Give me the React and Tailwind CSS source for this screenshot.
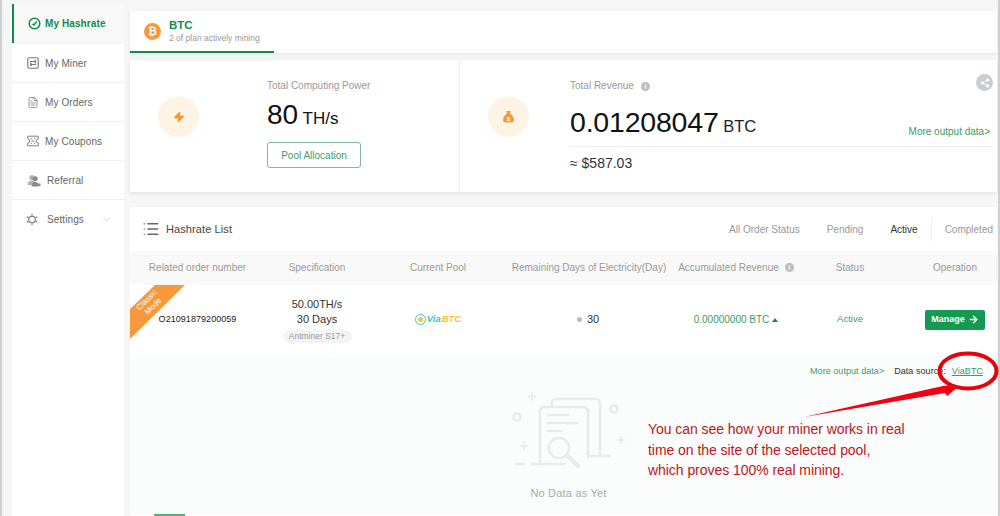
import React from 'react';
import { ArrowRight, ChevronDown, FileText, List, Share2, Zap } from 'lucide-react';

const font = { fontFamily: '"Liberation Sans", Arial, sans-serif' };

const HashIcon = () => (
  <svg width="13" height="13" viewBox="0 0 13 13" fill="none" stroke="#148a4c" strokeWidth="1.5">
    <circle cx="6.500" cy="6.500" r="5.300" />
    <path d="M4.500 6.800l1.500 1.200L8.800 4.500" />
  </svg>
);

const MinerIcon = () => (
  <svg width="12" height="12" viewBox="0 0 12 12" fill="none" stroke="#777" strokeWidth="1.1">
    <rect x="0.800" y="0.800" width="10.400" height="10.400" rx="1.500" />
    <path d="M3 4.500h3.500a2 2 0 0 1 2 2M9 7.500H5.500a2 2 0 0 1-2-2M7.500 3l1.500 1.500M4.500 9L3 7.500" />
  </svg>
);

const CouponIcon = () => (
  <svg width="13" height="12" viewBox="0 0 13 12" fill="none" stroke="#777" strokeWidth="1">
    <path d="M0.800 0.800h11.400v3a2.200 2.200 0 0 0 0 4.400v3H0.800v-3a2.200 2.200 0 0 0 0-4.400z" />
    <path d="M4 3.500h1.500M7.500 3.500H9M4 8.500h1.500M7.500 8.500H9M5 6h3" />
  </svg>
);

const ReferralIcon = () => (
  <svg width="14" height="13" viewBox="0 0 14 13" fill="#8a8a8a">
    <circle cx="5" cy="3.500" r="2.600" fill="#b0b0b0" />
    <path d="M0.500 11c0-3 2-4.500 4.500-4.500S9 8 9 11z" fill="#b0b0b0" />
    <circle cx="8.200" cy="4.800" r="2.500" />
    <path d="M4.500 12.500c0-3 1.500-4.500 3.700-4.500s3.800 1.500 3.800 4.500z" />
    <path d="M11 9.500h2.500v2.500H12z" />
  </svg>
);

const GearIcon = () => (
  <svg width="12" height="13" viewBox="0 0 12 13" fill="none" stroke="#777">
    <circle cx="6" cy="6.500" r="3.300" strokeWidth="1.100" />
    <path d="M6 0.800v2M6 10.200v2M0.800 3.700l1.700 1M9.500 8.300l1.700 1M0.800 9.300l1.700-1M9.500 4.700l1.700-1" strokeWidth="1.100" />
  </svg>
);

const InfoDot = () => (
  <span className="flex h-[9px] w-[9px] items-center justify-center rounded-full bg-[#bdbdbd] text-[7px] font-bold leading-none text-white">i</span>
);

const BtcCoin = () => (
  <div className="flex h-[17px] w-[17px] items-center justify-center rounded-full bg-[#f7983a] text-[11px] font-bold text-white">₿</div>
);

const navItems = [
  { label: 'My Miner', icon: <MinerIcon /> },
  { label: 'My Orders', icon: <FileText size={13} strokeWidth={1.5} color="#777" /> },
  { label: 'My Coupons', icon: <CouponIcon /> },
];

const columns = 'grid grid-cols-[135px_104px_138px_164px_130px_98px_98px] items-center';

const EmptyArt = () => (
  <svg width="114" height="88" viewBox="512 384 114 88" fill="none" stroke="#e9ebea" strokeWidth="2.600" strokeLinecap="round">
    <path d="M532 391v7M528.500 394.500h7M524 441v6M521 444h6M621 435v6M618 438h6" strokeWidth="1.800" />
    <circle cx="517" cy="415" r="3.500" />
    <circle cx="614" cy="407" r="3.500" />
    <path d="M552 404v-3a4 4 0 0 1 4-4h40a4 4 0 0 1 4 4v53" />
    <path d="M540 462v-52a5 5 0 0 1 5-5h38a5 5 0 0 1 5 5v45" />
    <path d="M548 413h20M548 421h29M548 429h14" />
    <circle cx="559" cy="446" r="10" />
    <path d="M568 454l10 10" strokeWidth="4.500" />
    <path d="M515 462h10M532 462h33M590 454h20" />
  </svg>
);

export default function App() {
  return (
    <div className="relative flex h-[516px] w-[1000px] overflow-hidden bg-[#f6f6f6] pl-[12px] pr-[3px] text-[10px] text-[#333]" style={font}>
      {/* left edge of the browser frame */}
      <div className="absolute left-0 top-0 h-full w-[2px] bg-[#cfcfcf]" />
      <div className="absolute right-0 top-0 h-full w-[2px] bg-[#cfcfcf]" />

      <aside className="mr-[6px] mt-[4px] w-[112px] shrink-0 bg-white">
        <div className="flex h-[39px] items-center gap-[4px] border-l-2 border-[#148a4c] bg-[#f8f8f8] pl-[14px] font-bold tracking-[0.1px] text-[#148a4c]">
          <HashIcon />
          <span>My Hashrate</span>
        </div>
        {navItems.map((item) => (
          <div key={item.label} className="flex h-[39px] items-center gap-[6px] border-t border-[#f1f1f1] pl-[15px] tracking-[0.1px] text-[#666]">
            <span className="flex w-[12px] justify-center">{item.icon}</span>
            <span>{item.label}</span>
          </div>
        ))}
        <div className="flex h-[39px] items-center gap-[6px] border-t border-[#f1f1f1] pl-[15px] tracking-[0.1px] text-[#666]">
          <ReferralIcon />
          <span>Referral</span>
        </div>
        <div className="flex h-[39px] items-center border-t border-[#f1f1f1] pl-[14px] tracking-[0.1px] text-[#666]">
          <GearIcon />
          <span className="ml-[9px]">Settings</span>
          <ChevronDown size={11} strokeWidth={1.2} color="#aaa" className="ml-[17px]" />
        </div>
      </aside>

      <main className="flex w-[867px] flex-col pt-[11px]">
        <div className="h-[42px] bg-white shadow-[0_1px_3px_rgba(0,0,0,0.08)]">
          <div className="flex h-[42px] w-[144px] items-center gap-[8px] border-b-2 border-[#148a4c] pl-[14px]">
            <BtcCoin />
            <div>
              <div className="text-[11.500px] font-bold leading-[13px] text-[#148a4c]">BTC</div>
              <div className="text-[8.500px] leading-[12px] text-[#999]">2 of plan actively mining</div>
            </div>
          </div>
        </div>

        <section className="mt-[7px] flex h-[132px] bg-white shadow-[0_1px_4px_rgba(0,0,0,0.1)]">
          <div className="flex w-[330px] border-r border-[#eeeeee] pl-[28px] pt-[36px]">
            <div className="flex h-[41px] w-[41px] items-center justify-center rounded-full bg-[#fdf4e6]">
              <Zap size={12} fill="#f39a1e" color="#f39a1e" />
            </div>
            <div className="ml-[68px] -mt-[16px]">
              <div className="text-[10px] leading-[12px] text-[#999]">Total Computing Power</div>
              <div className="mt-[7px] text-[17px] leading-[32px] text-[#111]">
                <span className="text-[28px]">80</span> TH/s
              </div>
              <button className="mt-[7px] h-[26px] w-[94px] rounded-[3px] border border-[#7fb89b] text-[10px] text-[#3d9a68]">Pool Allocation</button>
            </div>
          </div>
          <div className="relative flex flex-1 pl-[28px] pt-[36px]">
            <div className="flex h-[41px] w-[41px] items-center justify-center rounded-full bg-[#fdf4e6]">
              <svg width="13" height="13" viewBox="0 0 13 13">
                <path d="M4.200 1h4.600L7.900 3.500C10.500 5 12 7.500 12 10c0 1.500-1 2.500-2.500 2.500h-6C2 12.500 1 11.500 1 10c0-2.500 1.500-5 4.100-6.500z" fill="#f7983a" />
                <text x="6.500" y="10.500" fontSize="6" fill="#fff" textAnchor="middle" fontWeight="700">$</text>
              </svg>
            </div>
            <div className="ml-[41px] mr-[4px] -mt-[16px] flex-1">
              <div className="flex items-center gap-[7px] text-[10px] leading-[12px] text-[#999]">
                Total Revenue <InfoDot />
              </div>
              <div className="mt-[13px] flex items-end justify-between border-b border-[#eeeeee] pb-[7px] pr-[3px]">
                <div className="h-[34px] text-[16.500px] leading-[34px] text-[#222]">
                  <span className="text-[28.500px] tracking-[-0.2px] text-[#111]">0.01208047</span> BTC
                </div>
                <a className="mb-[1px] text-[10px] leading-[12px] text-[#3d9a68]">More output data&gt;</a>
              </div>
              <div className="mt-[7px] text-[14px] leading-[18px] text-[#333]">≈ $587.03</div>
            </div>
            <div className="absolute right-[4px] top-[14px] flex h-[17px] w-[17px] items-center justify-center rounded-full bg-[#c9ccd1]">
              <Share2 size={10} fill="#fff" color="#fff" />
            </div>
          </div>
        </section>

        <section className="mt-[15px] flex flex-1 flex-col bg-white">
          <div className="flex h-[44px] items-center justify-between pl-[12px] pr-[4px]">
            <div className="flex items-center gap-[6px] text-[11px] tracking-[0.1px] text-[#444]">
              <List size={18} strokeWidth={1.8} color="#666" />
              Hashrate List
            </div>
            <div className="flex items-center text-[10px] text-[#999]">
              <span>All Order Status</span>
              <span className="ml-[27px]">Pending</span>
              <span className="ml-[27px] text-[#333]">Active</span>
              <span className="ml-[13px] border-l border-[#eeeeee] py-[4px] pl-[13px]">Completed</span>
            </div>
          </div>

          <div className={`${columns} h-[34px] bg-[#f9f9f9] pb-[2px] text-center text-[10px] text-[#999]`}>
            <div>Related order number</div>
            <div>Specification</div>
            <div>Current Pool</div>
            <div>Remaining Days of Electricity(Day)</div>
            <div className="flex items-center justify-center gap-[6px]">Accumulated Revenue <InfoDot /></div>
            <div>Status</div>
            <div className="pl-[14px]">Operation</div>
          </div>

          <div className={`${columns} relative h-[70px] pb-[1px] text-center`}>
            <svg className="absolute left-0 top-0" width="56" height="55" viewBox="0 0 56 55">
              <polygon points="25,0 55,0 0,54 0,24" fill="#f7983a" />
            </svg>
            <div className="absolute left-[2px] top-[9px] w-[36px] -rotate-45 text-center text-[8px] leading-[9px] text-white">Classic<br />Mode</div>
            <div className="relative text-[9px] tracking-[0.05px] text-[#222]">O21091879200059</div>
            <div className="text-[11px] leading-[15.500px] text-[#333]">
              <div>50.00TH/s</div>
              <div>30 Days</div>
              <div className="mx-auto mt-[2px] w-[69px] rounded-full bg-[#f3f4f6] text-[8.500px] leading-[13px] text-[#999]">Antminer S17+</div>
            </div>
            <div className="flex items-center justify-center gap-[1px] text-[9.500px] font-bold italic">
              <div className="flex h-[11px] w-[11px] items-center justify-center rounded-full border-[1.500px] border-[#3cc4c0]">
                <div className="h-[5px] w-[5px] rounded-full bg-[#f0c83c]" />
              </div>
              <span className="text-[#3cc4c0]">Via</span><span className="text-[#efc42f]">BTC</span>
            </div>
            <div className="flex items-center justify-center gap-[5px] pr-[2px] text-[#333]">
              <span className="h-[5px] w-[5px] rounded-full bg-[#bbbbbb]" />
              <span className="text-[11px]">30</span>
            </div>
            <div className="flex items-center justify-center gap-[3px] text-[10px] text-[#3d9a68]">
              0.00000000 BTC
              <span className="h-0 w-0 border-x-[3.500px] border-b-[4px] border-x-transparent border-b-[#148a4c]" />
            </div>
            <div className="text-[9.500px] text-[#3d9a68]">Active</div>
            <div className="pl-[14px]">
              <button className="mx-auto flex h-[20px] w-[60px] items-center justify-center gap-[3px] rounded-[2px] bg-[#159a52] text-[9px] font-bold text-white">
                Manage <ArrowRight size={11} strokeWidth={3} />
              </button>
            </div>
          </div>

          <div className="flex flex-1 flex-col items-center bg-[#fbfdfc]">
            <div className="flex h-[33px] w-full items-center justify-end pr-[14px] text-[9px] tracking-[0.05px]">
              <a className="text-[#3d9a68]">More output data&gt;</a>
              <span className="ml-[10px] text-[#333]">Data source:</span>
              <a className="ml-[6px] text-[#3d9a68] underline">ViaBTC</a>
            </div>
            <div className="ml-[10px] -mt-[2px] flex flex-col items-center">
              <EmptyArt />
              <div className="mt-[11px] text-[11px] tracking-[0.2px] text-[#aaa]">No Data as Yet</div>
            </div>
          </div>
          {/* next row's tab starts at the bottom edge */}
          <div className="h-[2px] bg-white">
            <div className="ml-[24px] h-[2px] w-[31px] bg-[#4db082]" />
          </div>
        </section>
      </main>

      {/* red annotation drawn over the screenshot */}
      <svg className="absolute left-0 top-0" width="1000" height="516" viewBox="0 0 1000 516" fill="none">
        <ellipse cx="968" cy="371" rx="28.500" ry="17.500" stroke="#e8000c" strokeWidth="4" />
        <polygon points="804,417 943,386 952,385 958,387 947,396 945,393" fill="#f00010" />
      </svg>
      <div className="absolute left-[648px] top-[419px] w-[270px] text-[14px] leading-[20.500px] tracking-[-0.05px] text-[#bf1520]">
        You can see how your miner works in real<br />
        time on the site of the selected pool,<br />
        which proves 100% real mining.
      </div>
    </div>
  );
}
